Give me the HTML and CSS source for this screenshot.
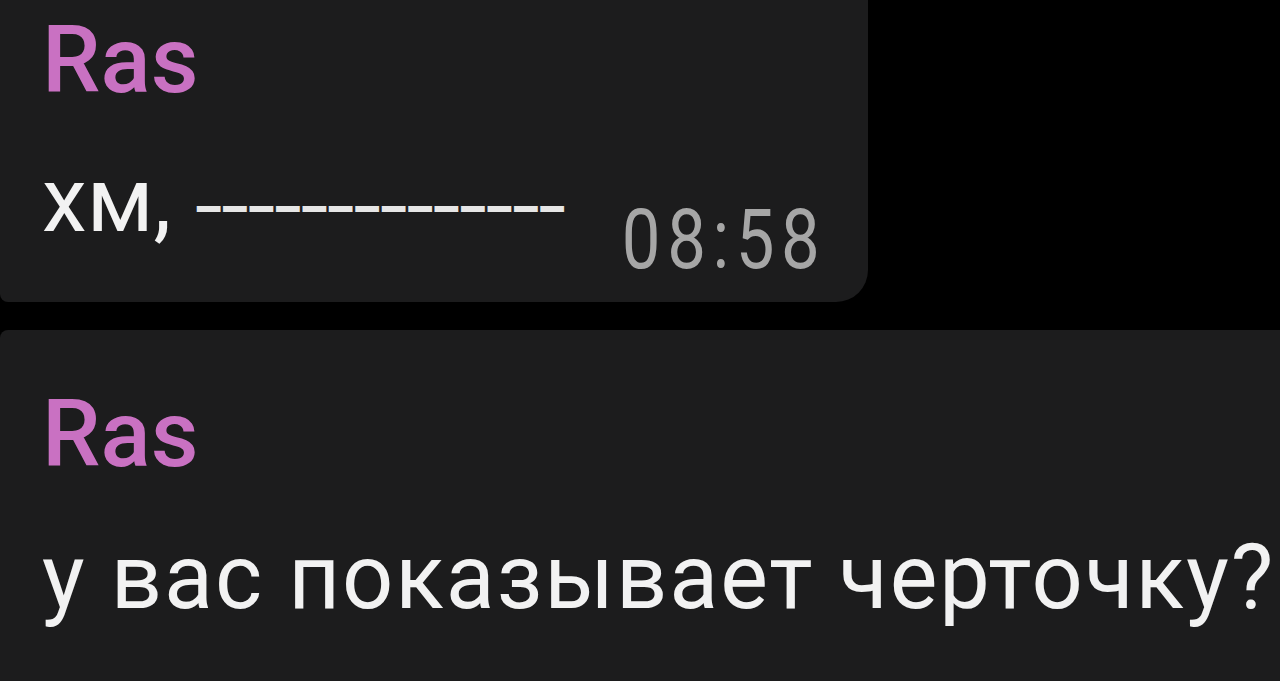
FILE: index.html
```html
<!DOCTYPE html>
<html lang="ru">
<head>
    <meta charset="UTF-8">
    <meta name="viewport" content="width=device-width, initial-scale=1.0">
    <title>Чат</title>
    <link rel="stylesheet" href="styles.css">
</head>
<body>

<div class="chat">
    <div class="bubble first">
        <div class="name">Ras</div>
        <div class="row">
            <span class="text">хм, <span class="dashes">––––––––––––––</span></span>
            <span class="time">08:58</span>
        </div>
    </div>

    <div class="bubble second">
        <div class="name">Ras</div>
        <div class="row">
            <span class="text wide">у вас показывает черточку?</span>
        </div>
    </div>
</div>

</body>
</html>
```

FILE: styles.css
```css
body {
    margin: 0;
    background-color: #000;
    font-family: Roboto, "Noto Sans", Arial, sans-serif;
    overflow: hidden;
}
.chat {
    display: flex;
    flex-direction: column;
    gap: 28px;
    width: 1280px;
    height: 681px;
}
.bubble {
    background-color: #1c1c1d;
    padding-left: 42px;
    box-sizing: border-box;
}
.bubble.first {
    width: 868px;
    height: 302px;
    padding-top: 14px;
    padding-right: 42px;
    border-radius: 0 0 32px 8px;
}
.bubble.second {
    width: 1300px;
    flex: 1;
    padding-top: 58px;
    border-radius: 8px 0 0 0;
}
.name {
    font-size: 93px;
    line-height: 1;
    font-weight: 500;
    color: #c971c2;
}
.row {
    display: flex;
    align-items: flex-start;
    justify-content: space-between;
    margin-top: 49px;
}
.second .row {
    margin-top: 52px;
}
.text {
    min-width: 0;
    font-size: 90px;
    line-height: 1;
    color: #f2f2f2;
    white-space: nowrap;
}
.text.wide {
    letter-spacing: 1.9px;
}
.dashes {
    font-size: 46px;
    font-weight: 900;
    letter-spacing: -2px;
    vertical-align: 6px;
    color: #e6e6e6;
}
.time {
    flex-shrink: 0;
    font-size: 84px;
    line-height: 1;
    color: #a6a6a6;
    letter-spacing: 8px;
    margin-top: 42px;
    transform: scaleX(0.82);
    transform-origin: right;
}
```
